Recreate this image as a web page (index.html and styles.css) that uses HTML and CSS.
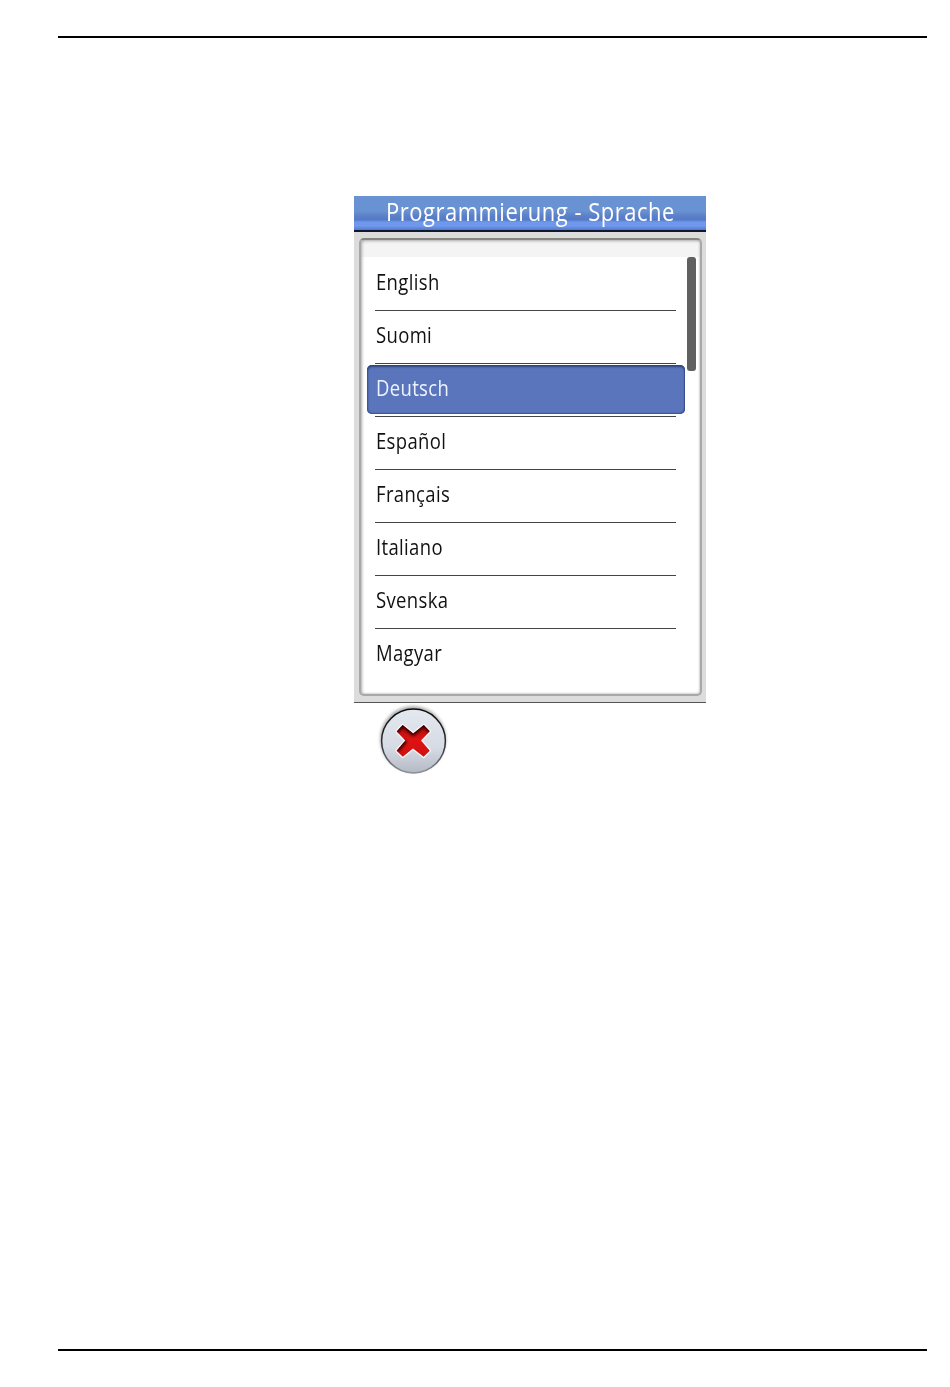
FILE: index.html
```html
<!DOCTYPE html>
<html lang="de">

<head>
  <meta charset="UTF-8">
  <meta name="viewport" content="width=device-width, initial-scale=1.0">
  <title>Programmierung - Sprache</title>
  <link rel="stylesheet" href="styles.css">
</head>

<body>
  <div class="page">
    <main class="device">
      <div class="screen">
        <h1 class="title"><span>Programmierung - Sprache</span></h1>
        <div class="panel">
          <ul class="languages">
            <li><span>English</span></li>
            <li><span>Suomi</span></li>
            <li class="selected"><span>Deutsch</span></li>
            <li><span>Español</span></li>
            <li><span>Français</span></li>
            <li><span>Italiano</span></li>
            <li><span>Svenska</span></li>
            <li><span>Magyar</span></li>
          </ul>
          <div class="scrollbar"></div>
        </div>
      </div>
      <button class="cancel" type="button" aria-label="Abbrechen">
        <svg width="80" height="80" viewBox="0 0 80 80">
          <defs>
            <linearGradient id="face" x1="0" y1="0" x2="0" y2="1">
              <stop offset="0" stop-color="#e4e8ef" />
              <stop offset="0.6" stop-color="#d6dbe4" />
              <stop offset="1" stop-color="#b4bac4" />
            </linearGradient>
            <linearGradient id="rim" x1="0" y1="0" x2="0" y2="1">
              <stop offset="0" stop-color="#080808" />
              <stop offset="0.6" stop-color="#33363a" />
              <stop offset="1" stop-color="#8d9197" />
            </linearGradient>
            <linearGradient id="red" x1="0" y1="0" x2="0" y2="1">
              <stop offset="0" stop-color="#b00c0c" />
              <stop offset="0.45" stop-color="#e01212" />
              <stop offset="1" stop-color="#d01010" />
            </linearGradient>
            <filter id="soft" x="-20%" y="-20%" width="140%" height="140%">
              <feGaussianBlur stdDeviation="1.4" />
            </filter>
            <clipPath id="cross">
              <path d="M27.6 25L38.2 33.6L48.8 25L54.8 31.3L46 40.5L54.8 50.7L48.6 56.8L38 48.4L27.8 56.8L21.6 50.7L30.4 40.5L21.6 31.5Z" />
            </clipPath>
          </defs>
          <circle cx="38" cy="39" r="33" fill="#777" opacity="0.6" filter="url(#soft)" />
          <circle cx="38.5" cy="41" r="31.9" fill="url(#face)" stroke="url(#rim)" stroke-width="1.5" />
          <path d="M27.6 25L38.2 33.6L48.8 25L54.8 31.3L46 40.5L54.8 50.7L48.6 56.8L38 48.4L27.8 56.8L21.6 50.7L30.4 40.5L21.6 31.5Z" fill="none" stroke="#f7f8fa" stroke-width="2.6" stroke-linejoin="round" />
          <path d="M27.6 25L38.2 33.6L48.8 25L54.8 31.3L46 40.5L54.8 50.7L48.6 56.8L38 48.4L27.8 56.8L21.6 50.7L30.4 40.5L21.6 31.5Z" fill="url(#red)" />
          <g clip-path="url(#cross)">
            <path d="M21.6 31.5L27.6 25L38.2 33.6L48.8 25L54.8 31.3M30.4 40.5L21.6 50.7" fill="none" stroke="#3a0505" stroke-width="4.5" filter="url(#soft)" />
          </g>
        </svg>
      </button>
    </main>
  </div>
</body>

</html>
```

FILE: styles.css
```css
body {
  margin: 0;
  background: #fff;
  font-family: "Open Sans", "Noto Sans", sans-serif;
}

/* printed page with a rule at the top and the bottom */
.page {
  box-sizing: border-box;
  width: 869px;
  height: 1315px;
  margin: 36px 0 0 58px;
  padding: 158px 0 0 296px;
  border-top: 2px solid #000;
  border-bottom: 2px solid #000;
}

.device {
  width: 352px;
}

.screen {
  box-sizing: border-box;
  display: flex;
  flex-direction: column;
  height: 507px;
  background: #dcdcdc;
  border-bottom: 1px solid #555;
}

.title {
  box-sizing: border-box;
  height: 36px;
  margin: 0;
  padding-left: 32px;
  border-bottom: 2px solid #10182c;
  background: linear-gradient(#6892d2 0, #6892d2 15px, #5b80c9 20px, #557ac6 24px, #6d98ec 26px, #7098ee 30px, #5278cc 34px);
  color: #fff;
  font-size: 25px;
  font-weight: 400;
  letter-spacing: 0.57px;
  line-height: 30px;
  white-space: nowrap;
}

.title span,
.languages span {
  display: inline-block;
  transform: scaleX(0.88);
  transform-origin: left;
}

.panel {
  box-sizing: border-box;
  display: flex;
  flex: 1;
  margin: 6px 4px 6px 5px;
  padding-top: 17px;
  border: 2px solid #a8a8a8;
  border-top-color: #85877f;
  border-radius: 5px;
  background: linear-gradient(#f4f4f4 17px, #fff 17px);
  box-shadow: inset 1px 1px 3px #aaa, inset -1px -1px 2px #ddd;
}

.languages {
  width: 301px;
  margin: 1px 0 0 14px;
  padding: 0;
  list-style: none;
}

.languages li {
  box-sizing: border-box;
  height: 52.95px;
  padding-left: 1px;
  border-bottom: 1px solid #444;
  color: #111;
  font-size: 21px;
  letter-spacing: 0.4px;
  line-height: 49px;
  white-space: nowrap;
}

.languages li:last-child {
  border-bottom: none;
}

.languages .selected {
  position: relative;
  z-index: 0;
  color: #eef4ff;
}

.selected::before {
  content: "";
  position: absolute;
  z-index: -1;
  top: 1px;
  right: -9px;
  bottom: 2px;
  left: -8px;
  border-radius: 5px;
  background: #5a75bb;
  box-shadow: inset 0 2px 2px #30457b, inset 1px 0 2px #3c5392, inset -1px -1px 1px #3d5497;
}

.scrollbar {
  width: 9px;
  height: 114px;
  margin-left: 11px;
  border-radius: 3px;
  background: #606060;
}

.cancel {
  display: block;
  width: 80px;
  height: 80px;
  margin: -3px 0 0 21px;
  padding: 0;
  border: none;
  background: none;
}

.cancel svg {
  display: block;
}
```
